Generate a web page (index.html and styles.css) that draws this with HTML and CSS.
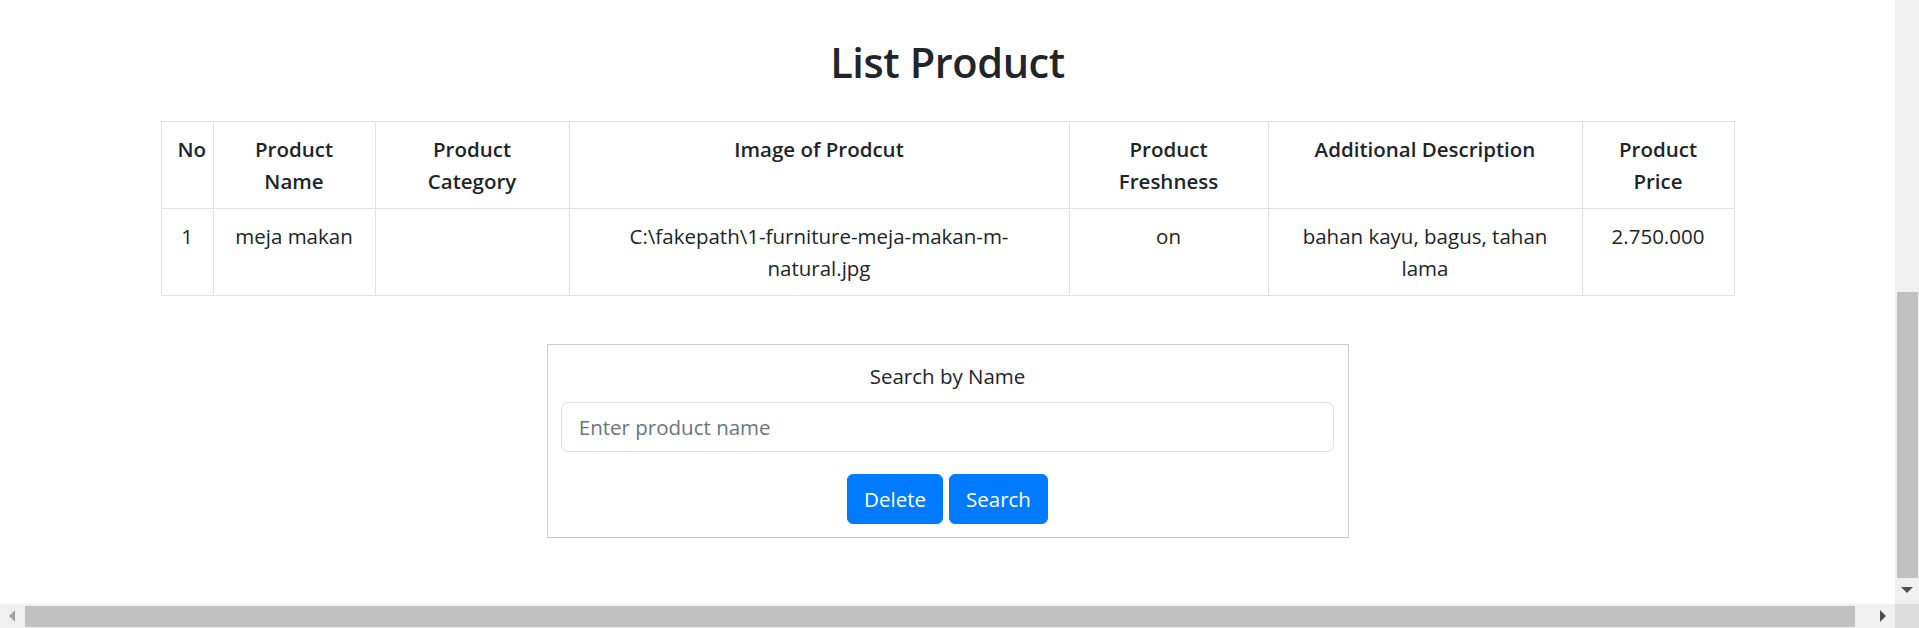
FILE: index.html
```html
<!DOCTYPE html>
<html lang="en">
<head>
<meta charset="utf-8">
<title>List Product</title>
<link rel="stylesheet" href="styles.css">
</head>
<body>
<div class="window">
  <main class="viewport">
    <h1 class="title">List Product</h1>
    <table class="product-table">
      <colgroup>
        <col class="c-no"><col class="c-name"><col class="c-cat"><col class="c-img"><col class="c-fresh"><col class="c-desc"><col class="c-price">
      </colgroup>
      <thead>
        <tr>
          <th>No</th>
          <th>Product Name</th>
          <th>Product Category</th>
          <th>Image of Prodcut</th>
          <th>Product Freshness</th>
          <th>Additional Description</th>
          <th>Product Price</th>
        </tr>
      </thead>
      <tbody>
        <tr>
          <td>1</td>
          <td>meja makan</td>
          <td></td>
          <td>C:\fakepath\1-furniture-meja-makan-m-natural.jpg</td>
          <td>on</td>
          <td>bahan kayu, bagus, tahan lama</td>
          <td>2.750.000</td>
        </tr>
      </tbody>
    </table>
    <section class="search-card">
      <label class="search-label" for="q">Search by Name</label>
      <input class="search-input" id="q" type="text" placeholder="Enter product name">
      <div class="btn-row">
        <button class="btn">Delete</button>
        <button class="btn">Search</button>
      </div>
    </section>
  </main>
  <div class="vscroll">
    <div class="vthumb"></div>
    <div class="arrow-down"></div>
  </div>
  <div class="hscroll">
    <div class="arrow-left"></div>
    <div class="hthumb"></div>
    <div class="arrow-right"></div>
  </div>
  <div class="corner"></div>
</div>
</body>
</html>
```

FILE: styles.css
```css
html, body {
  margin: 0;
  padding: 0;
  background: #fff;
}

body {
  font-family: "Open Sans", "Noto Sans", sans-serif;
  font-size: 20.5px;
  line-height: 32px;
  color: #212529;
}

.window {
  display: grid;
  grid-template-columns: 1fr 24px;
  grid-template-rows: 1fr 24px;
  height: 100vh;
  overflow: hidden;
}

.viewport {
  overflow: hidden;
  min-width: 0;
}

.title {
  margin: 37px 0 33px;
  text-align: center;
  font-size: 41.5px;
  line-height: 51px;
  font-weight: 600;
  letter-spacing: -0.4px;
}

.product-table {
  width: 1573px;
  margin: 0 auto;
  border-collapse: collapse;
  table-layout: fixed;
}

.c-no { width: 52px; }
.c-name { width: 162px; }
.c-cat { width: 194px; }
.c-img { width: 500px; }
.c-fresh { width: 199px; }
.c-desc { width: 314px; }
.c-price { width: 152px; }

.product-table th,
.product-table td {
  border: 1px solid #dee2e6;
  padding: 11px 16px;
  text-align: center;
  vertical-align: top;
}

.product-table th {
  font-weight: 600;
}

.search-card {
  width: 802px;
  box-sizing: border-box;
  margin: 48px auto 0;
  border: 1px solid #cccccc;
  padding: 14.5px 13.33px 13.5px;
  display: flex;
  flex-direction: column;
}

.search-label {
  text-align: center;
  margin-bottom: 10px;
}

.search-input {
  box-sizing: border-box;
  height: 50px;
  width: 100%;
  padding: 8px 17px;
  border: 1px solid #dcdfe3;
  border-radius: 7px;
  font-family: inherit;
  font-size: 20.5px;
  line-height: 32px;
  color: #495057;
  outline: none;
}

.search-input::placeholder {
  color: #6c757d;
}

.btn-row {
  display: flex;
  justify-content: center;
  gap: 6px;
  margin-top: 22px;
}

.btn {
  font-family: inherit;
  font-size: 20.5px;
  line-height: 32px;
  padding: 8px 16px;
  border: 1px solid #007bff;
  background: #007bff;
  color: #fff;
  border-radius: 6px;
}

.vscroll {
  background: #f0f0f0;
  display: flex;
  flex-direction: column;
  align-items: center;
  justify-content: flex-end;
  padding-bottom: 11px;
}

.vthumb {
  width: 21px;
  height: 286px;
  margin-left: 1px;
  margin-bottom: 9px;
  background: #c1c1c1;
}

.arrow-down {
  width: 0;
  height: 0;
  border-left: 6px solid transparent;
  border-right: 6px solid transparent;
  border-top: 6px solid #505050;
}

.hscroll {
  background: #f0f0f0;
  display: flex;
  align-items: center;
  padding: 0 9px;
}

.arrow-left {
  width: 0;
  height: 0;
  border-top: 6px solid transparent;
  border-bottom: 6px solid transparent;
  border-right: 6px solid #a3a3a3;
}

.hthumb {
  flex: 1;
  height: 21px;
  margin: 1px 25px 0 10px;
  background: #c1c1c1;
}

.arrow-right {
  width: 0;
  height: 0;
  border-top: 6px solid transparent;
  border-bottom: 6px solid transparent;
  border-left: 6px solid #505050;
}

.corner {
  background: #dcdcdc;
}
```
